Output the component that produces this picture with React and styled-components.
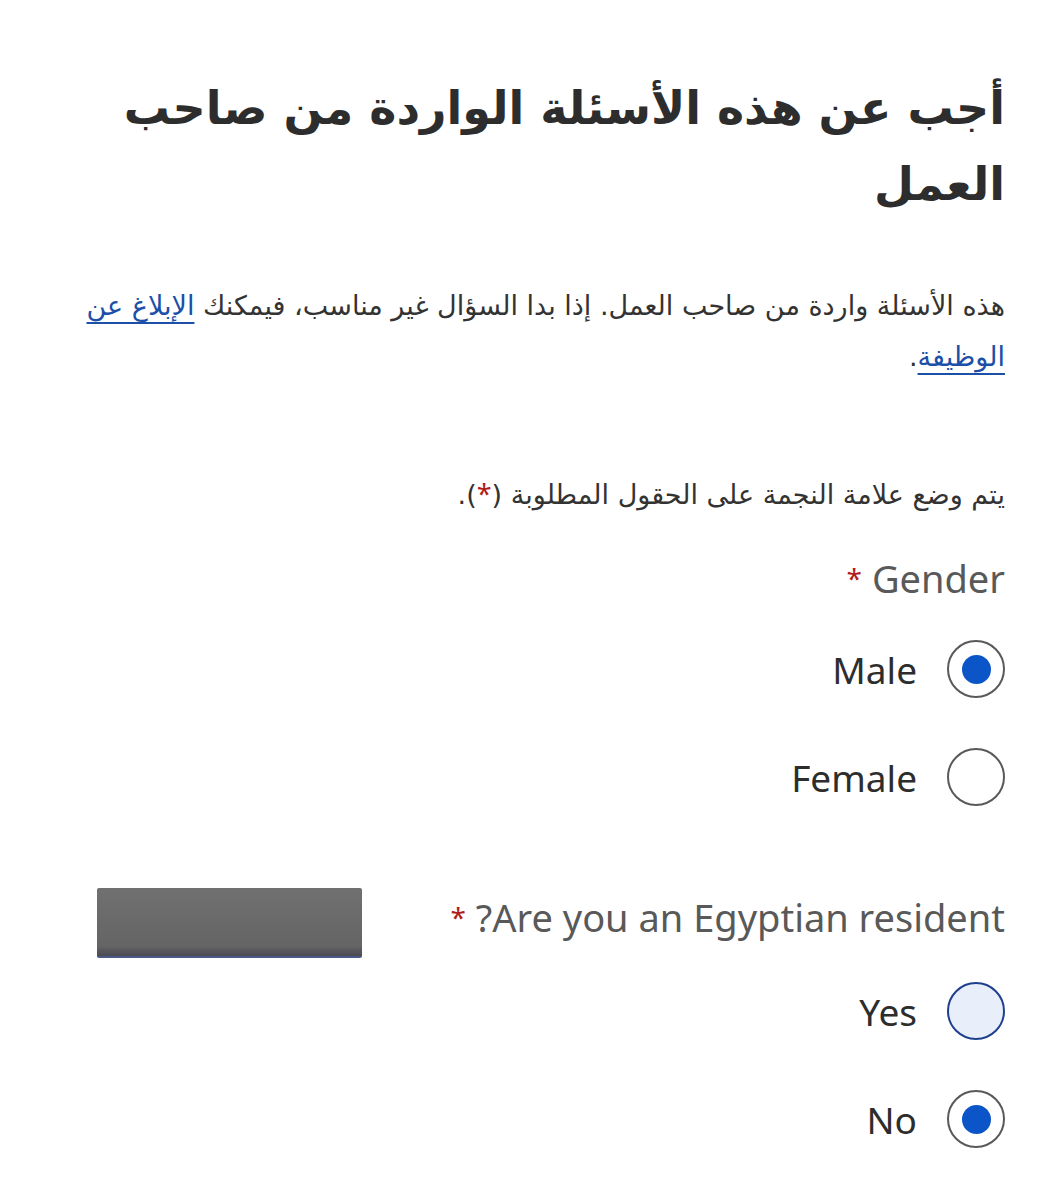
import React from "react";
import styled, { createGlobalStyle } from "styled-components";

const Global = createGlobalStyle`
  html, body { margin: 0; padding: 0; background: #ffffff; }
  body { font-family: "DejaVu Sans", "Noto Sans", sans-serif; }
`;

const Page = styled.main`
  direction: rtl;
  padding: 70px 41px 40px 72px;
  color: #2d2d2d;
`;

const Title = styled.h1`
  margin: 0;
  font-family: "DejaVu Sans", sans-serif;
  font-weight: 700;
  font-size: 46px;
  line-height: 76px;
  color: #2d2d2d;
`;

const Para = styled.p`
  margin: ${(p) => p.$mt || 0}px 0 0 0;
  font-family: "DejaVu Sans", sans-serif;
  font-size: 27px;
  line-height: 51px;
  color: #333333;
`;

const Link = styled.a`
  color: #1b4fa8;
  text-decoration: underline;
  text-underline-offset: 7px;
  text-decoration-thickness: 2px;
`;

const Star = styled.span`
  color: #b01c1c;
  font-family: "Noto Sans", sans-serif;
  font-size: ${(p) => p.$size || "inherit"};
  vertical-align: ${(p) => (p.$raise ? "4px" : "baseline")};
`;

const Field = styled.fieldset`
  border: 0;
  margin: ${(p) => p.$mt}px 0 0 0;
  padding: 0;
`;

const LegendRow = styled.div`
  display: flex;
  justify-content: space-between;
  align-items: center;
`;

const Legend = styled.div`
  font-family: "Noto Sans", sans-serif;
  font-size: 38px;
  line-height: 48px;
  color: #595959;
`;

const Redact = styled.div`
  width: 265px;
  height: 68px;
  margin: 6px 0 -6px 25px;
  background: linear-gradient(180deg, #707070 0%, #656565 85%, #4a4a52 100%);
  border-bottom: 2px solid #4b5a86;
  border-radius: 2px;
`;

const Options = styled.div`
  display: flex;
  flex-direction: column;
  gap: 50px;
  margin-top: ${(p) => p.$mt}px;
`;

const Option = styled.label`
  display: flex;
  align-items: center;
  gap: 30px;
  height: 58px;
  cursor: pointer;
`;

const Circle = styled.span`
  box-sizing: border-box;
  width: 58px;
  height: 58px;
  border-radius: 50%;
  border: 2px solid ${(p) => (p.$focus ? "#1f3f8f" : "#595959")};
  background: ${(p) => (p.$focus ? "#e8eefa" : "#ffffff")};
  display: flex;
  align-items: center;
  justify-content: center;
  flex-shrink: 0;
`;

const Dot = styled.span`
  width: 29px;
  height: 29px;
  border-radius: 50%;
  background: #0b55c8;
`;

const OptText = styled.span`
  font-family: "Noto Sans", sans-serif;
  font-size: 37px;
  color: #2d2d2d;
`;

function Radio({ label, checked, focus }) {
  return (
    <Option>
      <Circle $focus={focus}>{checked && <Dot />}</Circle>
      <OptText>{label}</OptText>
    </Option>
  );
}

export default function App() {
  return (
    <>
      <Global />
      <Page>
        <Title>أجب عن هذه الأسئلة الواردة من صاحب العمل</Title>
        <Para $mt={58}>
          هذه الأسئلة واردة من صاحب العمل. إذا بدا السؤال غير مناسب، فيمكنك{" "}
          <Link href="#">الإبلاغ عن الوظيفة</Link>.
        </Para>
        <Para $mt={86}>
          يتم وضع علامة النجمة على الحقول المطلوبة (<Star>*</Star>).
        </Para>
        <Field $mt={34}>
          <LegendRow>
            <Legend>
              Gender <Star $size="28px" $raise>*</Star>
            </Legend>
          </LegendRow>
          <Options $mt={38}>
            <Radio label="Male" checked />
            <Radio label="Female" />
          </Options>
        </Field>
        <Field $mt={76}>
          <LegendRow>
            <Legend>
              Are you an Egyptian resident? <Star $size="28px" $raise>*</Star>
            </Legend>
            <Redact />
          </LegendRow>
          <Options $mt={30}>
            <Radio label="Yes" focus />
            <Radio label="No" checked />
          </Options>
        </Field>
      </Page>
    </>
  );
}
